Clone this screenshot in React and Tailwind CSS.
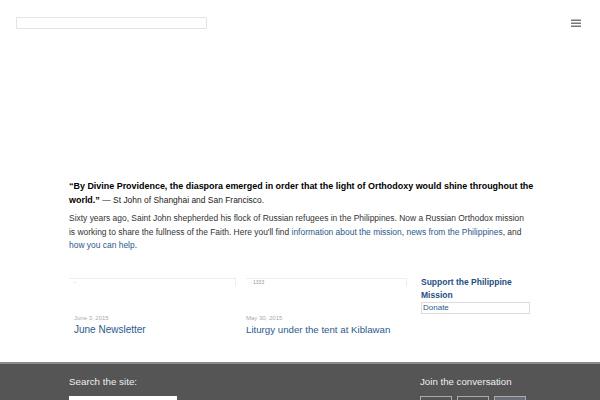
export default function App() {
  return (
    <div className="w-[600px] h-[400px] overflow-hidden bg-white font-['Liberation_Sans',Arial,sans-serif]">
      {/* Header */}
      <div className="h-[170px] flex items-start justify-between pl-4 pr-[19px] pt-[17px]">
        <div className="w-[191px] h-[12px] border border-[#e3e3e3] rounded-[1px]" />
        <svg width="10" height="9" viewBox="0 0 10 9" className="mt-[2px]">
          <rect x="0" y="0.5" width="10" height="1.5" fill="#777" />
          <rect x="0" y="3.5" width="10" height="1.5" fill="#777" />
          <rect x="0" y="6.5" width="10" height="1.5" fill="#777" />
        </svg>
      </div>

      {/* Intro */}
      <div className="h-[100px] pl-[69px] pr-[61px] pt-[10px] leading-[13.5px] text-[#222]">
        <p className="text-[8.95px]">
          <b className="text-black">“By Divine Providence, the diaspora emerged in order that the light of Orthodoxy would shine throughout the world.”</b>{' '}
          <span className="text-[8.45px]">— St John of Shanghai and San Francisco.</span>
        </p>
        <p className="mt-[5px] mr-[12px] text-[8.45px] text-[#333]">
          Sixty years ago, Saint John shepherded his flock of Russian refugees in the Philippines. Now a Russian Orthodox mission is working to share the fullness of the Faith. Here you'll find{' '}
          <span className="text-[#2b5a8c]">information about the mission</span>,{' '}
          <span className="text-[#2b5a8c]">news from the Philippines</span>, and{' '}
          <span className="text-[#2b5a8c]">how you can help</span>.
        </p>
      </div>

      {/* Posts + sidebar */}
      <div className="h-[92px] flex pl-[69px] pt-[8px]">
        <div className="w-[167px]">
          <div className="h-[8px] border-t border-r border-[#eee] pl-[4px] text-[5px] leading-[6px] text-[#999]">··</div>
          <div className="mt-[28px] pl-[5px] text-[6px] text-[#aaa] leading-[8px]">June 3, 2015</div>
          <div className="pl-[5px] mt-[2px] text-[10px] text-[#2b5a8c] leading-[12px]">June Newsletter</div>
        </div>
        <div className="w-[161px] ml-[10px]">
          <div className="h-[8px] border-t border-r border-[#eee] pl-[4px] text-[5px] leading-[6px] text-[#999]">· 1333</div>
          <div className="mt-[28px] text-[6px] text-[#aaa] leading-[8px]">May 30, 2015</div>
          <div className="mt-[2px] text-[9.7px] text-[#2b5a8c] leading-[12px]">Liturgy under the tent at Kiblawan</div>
        </div>
        <div className="ml-[14px] w-[109px] mt-[-2px]">
          <div className="text-[8.5px] font-bold leading-[13px] text-[#1f4e82]">Support the Philippine Mission</div>
          <div className="h-[12px] border border-[#ddd] px-[1px] text-[8px] leading-[10px] text-[#2b5a8c]">Donate</div>
        </div>
      </div>

      {/* Footer */}
      <div className="h-[38px] bg-[#555] border-t-2 border-[#8a8a8a] flex">
        <div className="pl-[69px] w-[420px] pt-[12px]">
          <div className="text-[9.8px] leading-[12px] text-[#eee]">Search the site:</div>
          <div className="mt-[8px] w-[108px] h-[10px] bg-white" />
        </div>
        <div className="pt-[12px]">
          <div className="text-[9.7px] leading-[12px] text-[#eee]">Join the conversation</div>
          <div className="mt-[8px] flex gap-[5px]">
            <div className="w-[32px] h-[10px] border border-[#aaa]" />
            <div className="w-[32px] h-[10px] border border-[#aaa]" />
            <div className="w-[32px] h-[10px] border border-[#aaa] bg-[#6a6e78]" />
          </div>
        </div>
      </div>
    </div>
  );
}
